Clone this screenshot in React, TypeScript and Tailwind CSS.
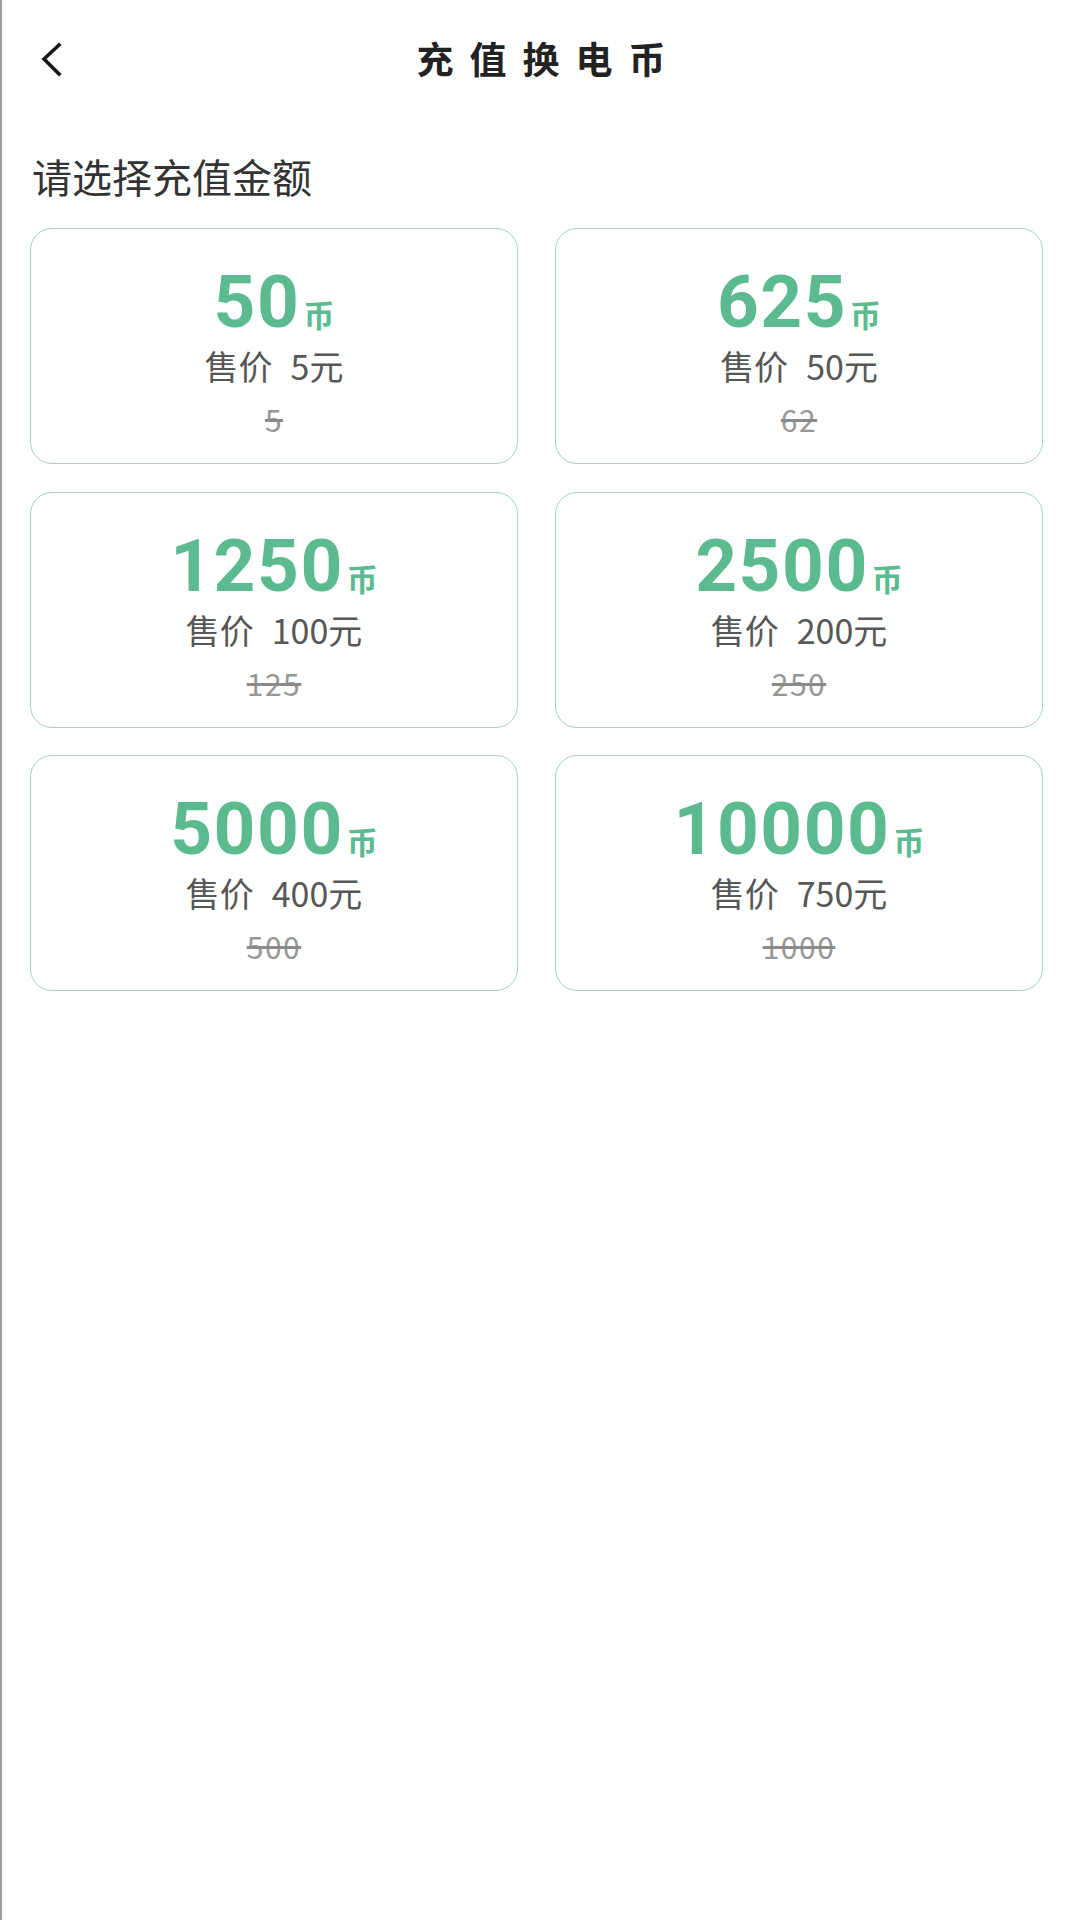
import React from 'react';

const PACKAGES = [
  { coins: 50, price: 5, original: 5 },
  { coins: 625, price: 50, original: 62 },
  { coins: 1250, price: 100, original: 125 },
  { coins: 2500, price: 200, original: 250 },
  { coins: 5000, price: 400, original: 500 },
  { coins: 10000, price: 750, original: 1000 },
];

const CJK = "font-['Noto_Sans_CJK_SC','Noto_Sans',sans-serif]";

function BackIcon() {
  return (
    <svg width="24" height="36" viewBox="0 0 24 36" fill="none" className="block">
      <path d="M19 4 L4 18 L19 33" stroke="#161616" strokeWidth="3.6" strokeLinecap="square" strokeLinejoin="miter" />
    </svg>
  );
}

function PackageCard({ coins, price, original }: { coins: number; price: number; original: number }) {
  return (
    <div className="h-[236px] rounded-[22px] border-[1.5px] border-[#a6d0c3] bg-white flex flex-col items-center pt-[37px]">
      <div className="flex items-baseline text-[#5bba90] font-bold">
        <span className="font-['Roboto','Liberation_Sans',sans-serif] text-[73px] leading-none tracking-[1.5px]">{coins}</span>
        <span className={`${CJK} text-[31px] leading-none ml-[3px]`}>币</span>
      </div>
      <div className={`${CJK} mt-[7px] text-[34px] leading-[40px] text-[#575757] flex`}>
        <span>售价</span>
        <span className="ml-[18px]">{price}元</span>
      </div>
      <div className={`${CJK} mt-[16px] text-[30px] leading-[34px] tracking-[1.5px] text-[#979797] line-through decoration-[#8a8a8a]`}>
        {original}
      </div>
    </div>
  );
}

export default function App() {
  return (
    <div className={`${CJK} w-[1080px] min-h-[1920px] bg-white border-l-2 border-[#9e9e9e]`}>
      <div className="grid grid-cols-[1fr_auto_1fr] h-[120px]">
        <div className="pl-[38px] pt-[41px]">
          <BackIcon />
        </div>
        <h1 className="pt-[40px] text-[37px] leading-none font-bold text-[#222222] tracking-[16px] pl-[16px]">
          充值换电币
        </h1>
        <div />
      </div>

      <div className="mt-[36px] pl-[30px] text-[40px] leading-none text-[#333333]">请选择充值金额</div>

      <div className="mt-[32px] pl-[28px] grid grid-cols-[488px_488px] gap-x-[37px] gap-y-[27.5px]">
        {PACKAGES.map((p) => (
          <PackageCard key={p.coins} {...p} />
        ))}
      </div>
    </div>
  );
}
